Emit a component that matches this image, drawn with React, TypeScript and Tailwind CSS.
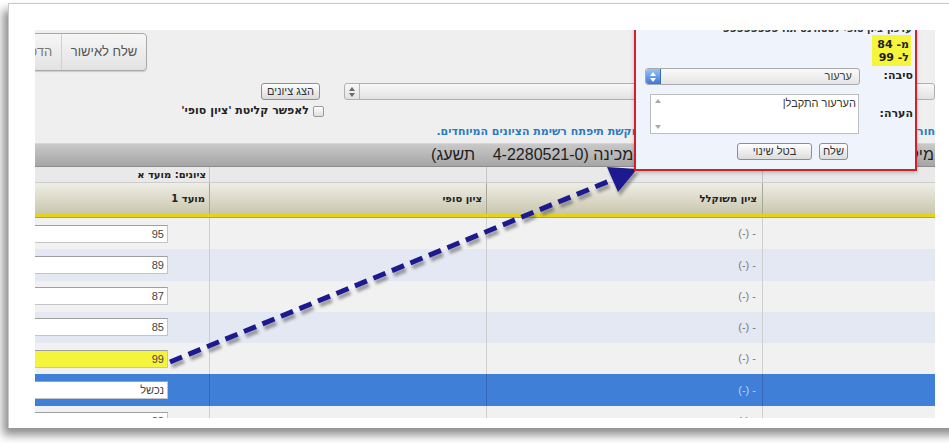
import React from "react";

type GradeRow = { grade: string; changed?: boolean; selected?: boolean };

const rows: GradeRow[] = [
  { grade: "95" },
  { grade: "89" },
  { grade: "87" },
  { grade: "85" },
  { grade: "99", changed: true },
  { grade: "נכשל", selected: true },
  { grade: "88" },
];

const Stepper = ({ active }: { active?: boolean }) => (
  <span
    className={`flex h-full w-[15px] shrink-0 items-center justify-center border-r ${
      active
        ? "rounded-l-[3px] border-[#3a6cc0] bg-linear-to-b from-[#9cc2f2] to-[#3b78d6]"
        : "border-[#b5b5b5]"
    }`}
  >
    <svg width="6" height="10" viewBox="0 0 6 10">
      <path d="M3 0 L6 4 H0 Z M3 10 L0 6 H6 Z" fill={active ? "#fff" : "#6b6b6b"} />
    </svg>
  </span>
);

const Row = ({ row, index }: { row: GradeRow; index: number }) => {
  const bg = row.selected ? "bg-[#407fd7]" : index % 2 ? "bg-[#e3e8f3]" : "bg-[#f1f1f1]";
  const line = row.selected ? "border-[#3667b2]" : "border-[#cfcfcf]";

  return (
    <div className={`flex h-[31.25px] shrink-0 ${bg}`}>
      <div className={`flex w-[175px] shrink-0 items-center justify-end border-r pr-[41px] ${line}`}>
        <div
          dir="rtl"
          className={`h-[18px] w-[160px] shrink-0 border border-[#c4c4c4] border-t-[#9f9f9f] pr-[3px] text-right text-[11px] leading-[16px] text-[#444] ${
            row.changed ? "bg-[#f4f43c]" : "bg-white"
          }`}
        >
          {row.grade}
        </div>
      </div>
      <div className={`w-[277px] shrink-0 border-r ${line}`} />
      <div
        className={`flex w-[276px] shrink-0 items-center justify-end border-r pr-[6px] text-[11px] ${line} ${
          row.selected ? "text-[#b9d2f4]" : "text-[#7a7a7a]"
        }`}
      >
        <span dir="ltr">(-) -</span>
      </div>
      <div className="flex-1" />
    </div>
  );
};

const Arrow = () => (
  <svg className="pointer-events-none absolute inset-0" width="900" height="388">
    <defs>
      <filter id="arrow-shadow" x="-10%" y="-10%" width="120%" height="120%">
        <feGaussianBlur stdDeviation="1.6" />
      </filter>
    </defs>
    <g transform="translate(2 4)" opacity="0.55" filter="url(#arrow-shadow)">
      <line x1="135" y1="332" x2="578" y2="149.5" stroke="#555" strokeWidth="5" strokeDasharray="13 7" />
      <polygon points="602,139 583,162 572,137" fill="#555" />
    </g>
    <line x1="135" y1="332" x2="578" y2="149.5" stroke="#1d1a8f" strokeWidth="5" strokeDasharray="13 7" />
    <polygon points="602,139 583,162 572,137" fill="#1d1a8f" />
  </svg>
);

const GradePopup = () => (
  <div
    dir="rtl"
    className="absolute left-[599px] top-[-10px] flex h-[151px] w-[283px] flex-col border-2 border-t-0 border-[#d11f2b] bg-[#eef3fc] font-['DejaVu_Sans',sans-serif] shadow-[0_2px_4px_rgba(0,0,0,0.2)]"
  >
    <div className="mt-[3px] h-[12px] whitespace-nowrap pr-[3px] text-[10px] font-bold leading-[12px] text-[#333]">
      עדכון ציון סופי לסטודנט ת.ז 55555555
    </div>
    <div className="mr-[4px] flex h-[31px] w-[39px] flex-col justify-center bg-[#f5f53c] pr-[2px] text-[11px] font-bold leading-[13px] text-[#222]">
      <span>מ- 84</span>
      <span>ל- 99</span>
    </div>
    <div className="mt-[2px] flex h-[17px] items-center gap-[14px]">
      <span className="w-[41px] shrink-0 pr-[2px] text-[11px] font-bold text-[#222]">סיבה:</span>
      <div dir="ltr" className="flex h-[17px] w-[215px] rounded-[3px] border border-[#a9a9a9] bg-linear-to-b from-[#fbfbfb] to-[#e4e4e4]">
        <Stepper active />
        <span dir="rtl" className="flex-1 pr-[7px] text-right font-['Liberation_Sans',sans-serif] text-[11px] leading-[15px] text-[#444]">
          ערעור
        </span>
      </div>
    </div>
    <div className="mt-[9px] flex h-[40px] items-center gap-[15px]">
      <span className="w-[41px] shrink-0 pr-[2px] text-[11px] font-bold text-[#222]">הערה:</span>
      <div dir="ltr" className="flex h-[40px] w-[209px] border border-[#bdbdbd] bg-white">
        <svg className="ml-[4px] mt-[4px] shrink-0" width="6" height="30" viewBox="0 0 6 30">
          <path d="M3 0 L6 4 H0 Z M3 30 L0 26 H6 Z" fill="#a8a8a8" />
        </svg>
        <div dir="rtl" className="flex-1 pr-[2px] pt-[1px] font-['Liberation_Sans',sans-serif] text-[11px] leading-[14px] text-[#333]">
          הערעור התקבל|
        </div>
      </div>
    </div>
    <div className="mt-[9px] flex h-[17px] gap-[7px] pr-[67px] font-['Liberation_Sans',sans-serif] text-[11px] text-[#333]">
      <div className="flex w-[29px] items-center justify-center rounded-[3px] border border-[#8f8f8f] bg-linear-to-b from-white to-[#dcdcdc]">
        שלח
      </div>
      <div className="flex w-[75px] items-center justify-center rounded-[3px] border border-[#8f8f8f] bg-linear-to-b from-white to-[#dcdcdc]">
        בטל שינוי
      </div>
    </div>
  </div>
);

export default function App() {
  return (
    <div className="h-[443px] w-[949px] overflow-hidden bg-white font-['Liberation_Sans',sans-serif]">
      <div className="ml-[8px] mt-[3px] h-[425px] w-[960px] border-l border-t border-[#c9c9c9] bg-white pl-[26px] pt-[26px] shadow-[-5px_7px_9px_rgba(0,0,0,0.45)]">
        <div className="relative flex h-[388px] w-[900px] flex-col overflow-hidden bg-[#efefef]">
          {/* toolbar */}
          <div className="flex h-[113px] shrink-0 flex-col">
            <div className="ml-[-32px] mt-[3px] flex h-[38px] w-[144px] rounded-[4px] border border-[#a9a9a9] bg-linear-to-b from-[#f6f6f6] to-[#e3e3e3] text-[13px] shadow-[0_1px_1px_rgba(0,0,0,0.15)]">
              <div className="flex w-[58px] items-center justify-center border-r border-[#d0d0d0] text-[#777]">הדפסה</div>
              <div className="flex flex-1 items-center justify-center text-[#555]">שלח לאישור</div>
            </div>

            <div className="mt-[12px] flex">
              <div className="flex w-[290px] shrink-0 flex-col items-end">
                <div className="mr-[5px] flex h-[17px] w-[59px] items-center justify-center rounded-[3px] border border-[#8f8f8f] bg-linear-to-b from-white to-[#dadada] text-[11px] text-[#333]">
                  הצג ציונים
                </div>
                <div className="mr-[1px] mt-[5px] flex items-center gap-[4px]">
                  <span className="font-['DejaVu_Sans',sans-serif] text-[11px] font-bold leading-[12px] text-[#222]" dir="rtl">
                    לאפשר קליטת 'ציון סופי'
                  </span>
                  <span className="h-[11px] w-[11px] rounded-[2px] border border-[#9a9a9a] bg-linear-to-b from-white to-[#dedede]" />
                </div>
              </div>
              <div className="ml-[19px] flex h-[17px] flex-1 rounded-[3px] border border-[#b0b0b0] bg-linear-to-b from-[#f8f8f8] to-[#e2e2e2]">
                <Stepper />
              </div>
            </div>

            <div
              dir="rtl"
              className="mb-[5px] mt-auto whitespace-nowrap font-['DejaVu_Sans',sans-serif] text-[11px] font-bold leading-[13px] text-[#2b7bc4]"
            >
              חורגים: בלחיצה על כפתור 'ציון מיוחד' בשורת הבחינה המבוקשת תיפתח רשימת הציונים המיוחדים.
            </div>
          </div>

          {/* course title */}
          <div
            dir="rtl"
            className="flex h-[24px] shrink-0 items-center whitespace-pre border-b border-t border-b-[#8c8c8c] border-t-[#d6d6d6] bg-linear-to-b from-[#c9c9c9] to-[#a6a6a6] pr-[1px] text-[16px] text-[#1e1e1e]"
          >
            מיקרו כלכלה א' לסטודנטים בשנה הראשונה - מכינה (4-2280521-0    תשעג)
          </div>

          {/* header: session caption */}
          <div className="flex h-[16px] shrink-0 border-b border-[#cdcdcd] bg-[#e9e9e9] font-['DejaVu_Sans',sans-serif] text-[10px] font-bold text-[#222]">
            <div dir="rtl" className="flex w-[175px] shrink-0 items-center border-r border-[#c6c6c6] pr-[3px]">
              ציונים: מועד א
            </div>
            <div className="w-[277px] shrink-0 border-r border-[#c6c6c6]" />
            <div className="w-[276px] shrink-0 border-r border-[#c6c6c6]" />
            <div className="flex-1" />
          </div>

          {/* header: columns */}
          <div className="flex h-[31px] shrink-0 bg-linear-to-b from-[#efeee6] to-[#c9c6ae] font-['DejaVu_Sans',sans-serif] text-[10px] font-bold text-[#222]">
            <div dir="rtl" className="flex w-[175px] shrink-0 items-center border-r border-[#a9a795] pr-[4px]">
              מועד 1
            </div>
            <div dir="rtl" className="flex w-[277px] shrink-0 items-center border-r border-[#a9a795] pr-[4px]">
              ציון סופי
            </div>
            <div dir="rtl" className="flex w-[276px] shrink-0 items-center border-r border-[#a9a795] pr-[5px]">
              ציון משוקלל
            </div>
            <div className="flex-1" />
          </div>
          <div className="h-[3px] shrink-0 bg-[#e4d31c]" />
          <div className="h-[1px] shrink-0 bg-[#a09e86]" />

          {rows.map((row, index) => (
            <Row key={index} row={row} index={index} />
          ))}

          <Arrow />
          <GradePopup />
        </div>
      </div>
    </div>
  );
}
